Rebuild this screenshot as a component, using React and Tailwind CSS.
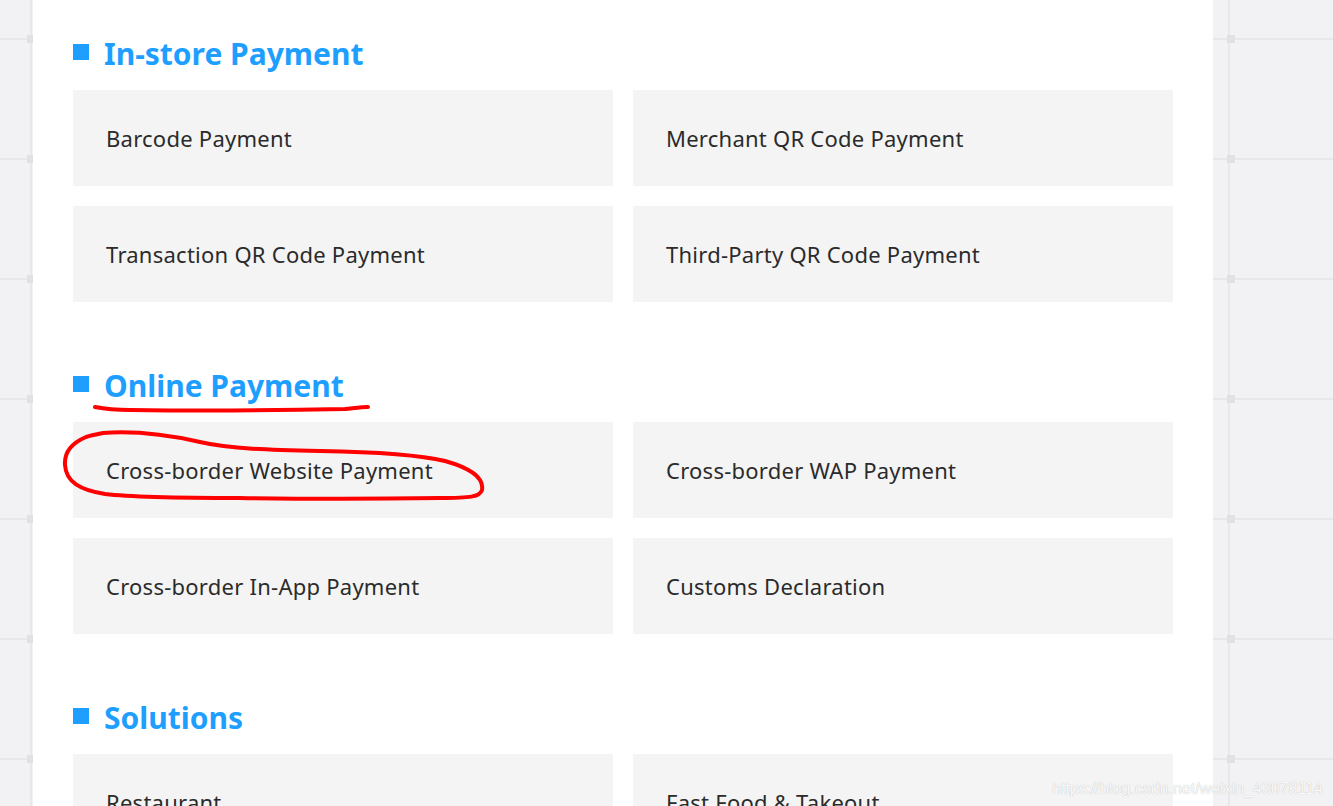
import React from 'react';

const sections = [
    { title: 'In-store Payment', items: ['Barcode Payment', 'Merchant QR Code Payment', 'Transaction QR Code Payment', 'Third-Party QR Code Payment'] },
    { title: 'Online Payment', items: ['Cross-border Website Payment', 'Cross-border WAP Payment', 'Cross-border In-App Payment', 'Customs Declaration'] },
    { title: 'Solutions', items: ['Restaurant', 'Fast Food & Takeout', 'Retail', 'Hotel'] },
];

// grid marks of the backdrop
const rows = [39, 159, 279, 399, 519, 639, 759];
const cols = [31, 1231];

export default function App() {
    return (
        <div className="relative h-[806px] w-full overflow-hidden bg-[#f2f2f4] font-['Noto_Sans','Open_Sans',sans-serif]">
            {/* background grid */}
            <div className="absolute inset-0 bg-[linear-gradient(to_bottom,transparent_38px,#e7e8ea_38px,#e7e8ea_40px,transparent_40px)] bg-[length:100%_120px]" />
            <div className="absolute inset-0 flex">
                <div className="w-[32px] border-r-2 border-[#e7e8ea]" />
                <div className="w-[1198px] border-r-2 border-[#e7e8ea]" />
            </div>
            {rows.map((y) => cols.map((x) => (
                <div key={'s' + x + y} className="absolute w-[8px] h-[8px] bg-[#e0e2e2]" style={{ left: x - 4, top: y - 4 }} />
            )))}

            {/* panel */}
            <div className="relative ml-[33px] w-[1180px] h-full bg-white px-[40px] pt-[36px]">
                {sections.map((sec, i) => (
                    <div key={sec.title} className={i > 0 ? 'mt-[66px]' : ''}>
                        <div className="flex items-center h-[36px] mb-[18px]">
                            <span className="w-[16px] h-[16px] bg-[#1e9fff] mb-[4px]" />
                            <h2 className="ml-[15px] text-[30px] leading-none font-bold text-[#1e9fff]">{sec.title}</h2>
                        </div>
                        <div className="grid grid-cols-2 gap-[20px]">
                            {sec.items.map((item) => (
                                <div key={item} className="h-[96px] flex items-center pl-[33px] bg-[#f4f4f4] text-[22px] tracking-[0.25px] text-[#2b2b2b]">
                                    {item}
                                </div>
                            ))}
                        </div>
                    </div>
                ))}
            </div>

            {/* red hand-drawn marks */}
            <svg className="absolute inset-0 pointer-events-none" width="1333" height="806">
                <path
                    d="M95 407 C105 409 115 410 130 410 C200 411 300 410 345 409 C355 408 362 407 368 407"
                    fill="none" stroke="#ff0000" strokeWidth="4" strokeLinecap="round"
                />
                <path
                    d="M103 433 C130 431 160 433 200 442 C230 449 270 450 320 451 C380 452 420 455 445 461 C470 468 484 478 482 490 C480 497 470 498 440 498 C380 499 300 499 240 498 C180 498 130 497 105 494 C80 490 66 482 65 465 C64 452 72 443 86 437 C92 435 98 434 103 433 Z"
                    fill="none" stroke="#ff0000" strokeWidth="4" strokeLinejoin="round"
                />
            </svg>

            {/* watermark */}
            <div className="absolute left-[1052px] top-[777px] text-[16px] font-['Liberation_Sans',Arial,sans-serif] text-[#fafafa] [text-shadow:0_0_1px_#b0b0b0]">
                https://blog.csdn.net/weixin_43078114
            </div>
        </div>
    );
}
